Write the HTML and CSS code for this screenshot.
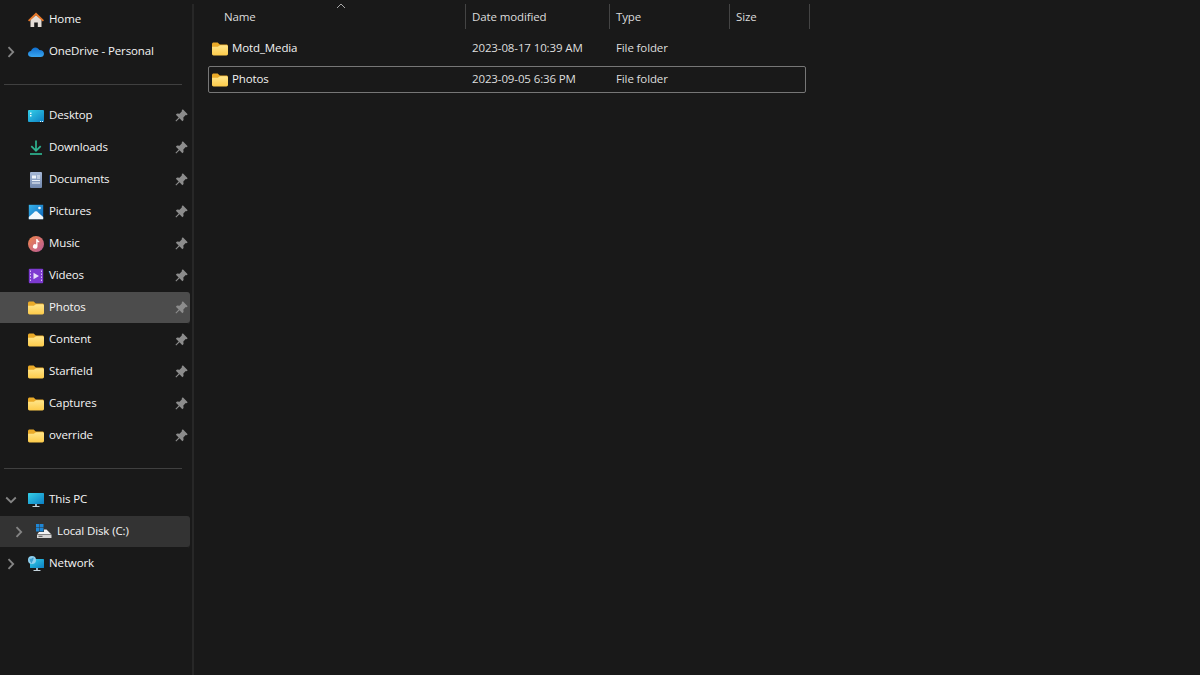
FILE: index.html
```html
<!DOCTYPE html>
<html lang="en">
<head>
<meta charset="utf-8">
<title>File Explorer</title>
<link rel="stylesheet" href="styles.css">
</head>
<body>
<svg class="defs" width="0" height="0" aria-hidden="true">
  <defs>
    <linearGradient id="gFolder" x1="0" y1="0" x2="0" y2="1"><stop offset="0" stop-color="#ffe58a"/><stop offset="1" stop-color="#fdcb4a"/></linearGradient>
    <linearGradient id="gScreen" x1="0" y1="0" x2="1" y2="1"><stop offset="0" stop-color="#35d0e8"/><stop offset="1" stop-color="#0c7fc4"/></linearGradient>
    <linearGradient id="gCloud" x1="0" y1="0" x2="0" y2="1"><stop offset="0" stop-color="#0f6fd0"/><stop offset="1" stop-color="#3aa6f0"/></linearGradient>
    <linearGradient id="gMusic" x1="0" y1="0" x2="1" y2="1"><stop offset="0" stop-color="#f0864a"/><stop offset="1" stop-color="#b85a9a"/></linearGradient>
    <linearGradient id="gPic" x1="0" y1="0" x2="1" y2="1"><stop offset="0" stop-color="#38b4ec"/><stop offset="1" stop-color="#0b62b8"/></linearGradient>
    <linearGradient id="gDoc" x1="0" y1="0" x2="0" y2="1"><stop offset="0" stop-color="#a6b8d6"/><stop offset="1" stop-color="#7187ad"/></linearGradient>
    <symbol id="folder" viewBox="0 0 16 16">
      <path d="M0 3.100C0 2.200.7 1.500 1.600 1.500h4l2.200 1.900h6.600c.9 0 1.600.7 1.600 1.600V7H0z" fill="#eaaa28"/>
      <path d="M0 5.800h5.800L8 4.300h6.400c.9 0 1.600.7 1.600 1.600v6.900c0 .9-.7 1.600-1.600 1.600H1.600C.7 14.400 0 13.700 0 12.800z" fill="url(#gFolder)"/>
    </symbol>
    <symbol id="pin" viewBox="0 0 12 12">
      <path d="M7.200.3l4.500 4.500-1 1-.8-.2-2.200 2.200.2 2.300-1.100 1.100L4.200 8.600 1.100 11.600.4 10.900l3-3.100L.8 5.200l1.100-1.100 2.300.2 2.200-2.200-.2-.8z" fill="#8c8c8c"/>
    </symbol>
    <symbol id="chevRight" viewBox="0 0 8 12">
      <path d="M1.500 1.200 6.200 6l-4.700 4.800" fill="none" stroke="#858585" stroke-width="1.800"/>
    </symbol>
  </defs>
</svg>

<div class="window">
  <aside class="nav">
    <div class="row">
      <span class="chev"></span>
      <svg class="icon" viewBox="0 0 16 16"><path d="M2.500 7.500 8 3l5.500 4.500V15H9.800v-4.500H6.200V15H2.500z" fill="#e3dcd6"/><path d="M0 8.200 8 .6l8 7.600-1.200 1.200L8 3.200 1.200 9.400z" fill="#e8792b"/></svg>
      <span class="label">Home</span>
    </div>
    <div class="row">
      <span class="chev"><svg class="chev-icon"><use href="#chevRight"/></svg></span>
      <svg class="icon" viewBox="0 0 16 16"><path d="M4 13C1.600 13 0 11.800 0 10 0 8.400 1.200 7.200 3 7.100 3.800 4.900 5.400 3.600 7.400 3.600c1.700 0 3.100.9 3.900 2.500 2.700-.2 4.700 1.300 4.700 3.600 0 2-1.400 3.300-3.400 3.300z" fill="url(#gCloud)"/></svg>
      <span class="label">OneDrive - Personal</span>
    </div>

    <div class="sep"></div>

    <div class="row">
      <span class="chev"></span>
      <svg class="icon" viewBox="0 0 16 16"><rect y="2" width="16" height="12" rx="1" fill="url(#gScreen)"/><path d="M2 4.500h1.500V6H2zM2 7h1.500v1.500H2zM12 13h1v1h-1zM14 13h1v1h-1z" fill="#e8fbff"/></svg>
      <span class="label">Desktop</span>
      <svg class="pin"><use href="#pin"/></svg>
    </div>
    <div class="row">
      <span class="chev"></span>
      <svg class="icon" viewBox="0 0 16 16"><path d="M8 .5v10M3.300 6.100 8 10.800l4.700-4.700" fill="none" stroke="#2fb592" stroke-width="1.700"/><path d="M2 14h12" stroke="#2fb592" stroke-width="1.700"/></svg>
      <span class="label">Downloads</span>
      <svg class="pin"><use href="#pin"/></svg>
    </div>
    <div class="row">
      <span class="chev"></span>
      <svg class="icon" viewBox="0 0 16 16"><rect x="2" width="12" height="16" rx="1" fill="url(#gDoc)"/><path d="M4 3.500h4v3H4zM9 3.500h3v1H9zM9 5.500h3v1H9zM4 8h8v1H4zM4 10.500h8v1H4z" fill="#eef3fa"/></svg>
      <span class="label">Documents</span>
      <svg class="pin"><use href="#pin"/></svg>
    </div>
    <div class="row">
      <span class="chev"></span>
      <svg class="icon" viewBox="0 0 16 16"><rect x=".8" y=".8" width="14.400" height="14.400" fill="url(#gPic)"/><path d="M.8 13 7 7.500c.6-.5 1.400-.5 2 0l6.200 5.500v2.200H.8z" fill="#f2f8fd"/><circle cx="11.500" cy="4" r="1.300" fill="#f2f8fd"/></svg>
      <span class="label">Pictures</span>
      <svg class="pin"><use href="#pin"/></svg>
    </div>
    <div class="row">
      <span class="chev"></span>
      <svg class="icon" viewBox="0 0 16 16"><circle cx="8" cy="8" r="8" fill="url(#gMusic)"/><path d="M8.200 3h1.300c.1 1.300.9 1.800 1.800 2v1.300c-.7 0-1.300-.2-1.800-.6v4.800a2.300 2.300 0 1 1-1.300-2.100z" fill="#fff"/></svg>
      <span class="label">Music</span>
      <svg class="pin"><use href="#pin"/></svg>
    </div>
    <div class="row">
      <span class="chev"></span>
      <svg class="icon" viewBox="0 0 16 16"><rect x=".8" y=".8" width="14.400" height="14.400" rx="1" fill="#7d3ad0"/><path d="M2 2.500h1v1.500H2zM2 5.500h1V7H2zM2 8.500h1V10H2zM2 11.500h1V13H2zM13 2.500h1v1.500h-1zM13 5.500h1V7h-1zM13 8.500h1V10h-1zM13 11.500h1V13h-1z" fill="#d7c2f5"/><path d="M5.500 4.800 11 8l-5.500 3.200z" fill="#e7dcfa"/></svg>
      <span class="label">Videos</span>
      <svg class="pin"><use href="#pin"/></svg>
    </div>
    <div class="row row-active">
      <span class="chev"></span>
      <svg class="icon"><use href="#folder"/></svg>
      <span class="label">Photos</span>
      <svg class="pin"><use href="#pin"/></svg>
    </div>
    <div class="row">
      <span class="chev"></span>
      <svg class="icon"><use href="#folder"/></svg>
      <span class="label">Content</span>
      <svg class="pin"><use href="#pin"/></svg>
    </div>
    <div class="row">
      <span class="chev"></span>
      <svg class="icon"><use href="#folder"/></svg>
      <span class="label">Starfield</span>
      <svg class="pin"><use href="#pin"/></svg>
    </div>
    <div class="row">
      <span class="chev"></span>
      <svg class="icon"><use href="#folder"/></svg>
      <span class="label">Captures</span>
      <svg class="pin"><use href="#pin"/></svg>
    </div>
    <div class="row">
      <span class="chev"></span>
      <svg class="icon"><use href="#folder"/></svg>
      <span class="label">override</span>
      <svg class="pin"><use href="#pin"/></svg>
    </div>

    <div class="sep"></div>

    <div class="row">
      <span class="chev"><svg class="chev-icon chev-open"><use href="#chevRight"/></svg></span>
      <svg class="icon" viewBox="0 0 16 16"><rect y="1" width="16" height="11" rx=".6" fill="url(#gScreen)"/><path d="M7 12h2v2H7z" fill="#9fb6c4"/><path d="M4.500 14h7v1h-7z" fill="#c6d5de"/></svg>
      <span class="label">This PC</span>
    </div>
    <div class="row row-current row-child">
      <span class="chev"><svg class="chev-icon"><use href="#chevRight"/></svg></span>
      <svg class="icon" viewBox="0 0 16 16"><path d="M0 0h3.500v3.500H0zM4 0h3.500v3.500H4zM0 4h3.500v3.500H0zM4 4h3.500v3.500H4z" fill="#1f87d6"/><path d="M1.500 10 3 8h5V5.500h2.500L15 10z" fill="#f2f2f2"/><path d="M1 10.500h14.500V14H1z" fill="#d4d4d4"/><path d="M2.500 11.800h4v1h-4z" fill="#4a4a4a"/></svg>
      <span class="label">Local Disk (C:)</span>
    </div>
    <div class="row">
      <span class="chev"><svg class="chev-icon"><use href="#chevRight"/></svg></span>
      <svg class="icon" viewBox="0 0 16 16"><rect x="2" y="3" width="14" height="9" rx=".6" fill="url(#gScreen)"/><path d="M8 12h2v2H8z" fill="#9fb6c4"/><path d="M5.500 14h7v1h-7z" fill="#c6d5de"/><circle cx="4" cy="4" r="4" fill="#8fd0ee"/><path d="M1.500 2.500C3 3.500 4 2 5.500 1.500 6 3 4.500 5 3.500 7.500 2.500 6 1.500 4.500 1.500 2.500z" fill="#3d9fd0"/></svg>
      <span class="label">Network</span>
    </div>
  </aside>

  <main class="content">
    <header class="head">
      <div class="col col-name">Name<svg class="sort" viewBox="0 0 10 6"><path d="M1 5 5 1l4 4" fill="none" stroke="#a8a8a8" stroke-width="1"/></svg></div>
      <div class="col col-date">Date modified</div>
      <div class="col col-type">Type</div>
      <div class="col col-size">Size</div>
    </header>
    <div class="list">
      <div class="file">
        <div class="file-name"><svg class="icon"><use href="#folder"/></svg><span>Motd_Media</span></div>
        <div class="cell">2023-08-17 10:39 AM</div>
        <div class="cell">File folder</div>
      </div>
      <div class="file file-focus">
        <div class="file-name"><svg class="icon"><use href="#folder"/></svg><span>Photos</span></div>
        <div class="cell">2023-09-05 6:36 PM</div>
        <div class="cell">File folder</div>
      </div>
    </div>
  </main>
</div>
</body>
</html>
```
FILE: styles.css
```css
* { box-sizing: border-box; }
html, body { margin: 0; height: 100%; }
body {
  background: #191919;
  color: #f2f2f2;
  font-family: "Open Sans", "Noto Sans", "Liberation Sans", sans-serif;
  font-size: 11.5px;
  letter-spacing: -0.12px;
  overflow: hidden;
}
.defs { position: absolute; }
.window { display: flex; width: 1200px; height: 675px; }

.nav {
  width: 194px;
  flex: none;
  padding: 4px 4px 0 0;
  position: relative;
}
.nav::after {
  content: "";
  position: absolute;
  top: 4px;
  bottom: 0;
  right: 0;
  width: 2px;
  background: #272727;
}
.row {
  display: flex;
  align-items: center;
  height: 32px;
  padding-bottom: 1px;
  border-radius: 0 3px 3px 0;
}
.row-active { background: #4c4c4c; box-shadow: inset 0 -1px #191919; }
.row-current { background: #333333; box-shadow: inset 0 -1px #191919; }
.row-child { padding-left: 8px; }
.chev { width: 20px; height: 16px; flex: none; display: flex; align-items: center; justify-content: center; padding-left: 1px; }
.chev-icon { width: 8px; height: 12px; }
.chev-open { transform: rotate(90deg); }
.icon { width: 16px; height: 16px; flex: none; margin-left: 8px; display: block; }
.label { margin: 0 0 2px 5px; flex: 1; white-space: nowrap; color: #f5f5f5; }
.pin { width: 13px; height: 13px; flex: none; margin-right: 2px; }
.sep { height: 32px; display: flex; align-items: center; padding: 0 8px 0 4px; }
.sep::before { content: ""; flex: 1; height: 1px; background: #404040; }

.content { flex: 1; padding: 4px 0 0 14px; }
.head { display: flex; height: 25px; margin-bottom: 6px; color: #dcdcdc; }
.col { height: 25px; padding-left: 6px; line-height: 25px; border-right: 1px solid #444; position: relative; }
.col-name { width: 258px; padding-left: 16px; }
.col-date { width: 144px; }
.col-type { width: 120px; }
.col-size { width: 80px; }
.sort { position: absolute; left: 128px; top: -1px; width: 10px; height: 6px; }

.list { display: flex; flex-direction: column; gap: 4px; width: 598px; }
.file {
  display: grid;
  grid-template-columns: 262px 144px 1fr;
  align-items: center;
  height: 27px;
  padding-left: 1px;
  border: 1px solid transparent;
  border-radius: 2px;
  color: #dedede;
}
.cell { margin-bottom: 2px; }
.file-focus { border-color: #767676; }
.file-name { display: flex; align-items: center; color: #f2f2f2; }
.file-name .icon { margin-left: 2px; }
.file-name span { margin: 0 0 2px 4px; }
```
